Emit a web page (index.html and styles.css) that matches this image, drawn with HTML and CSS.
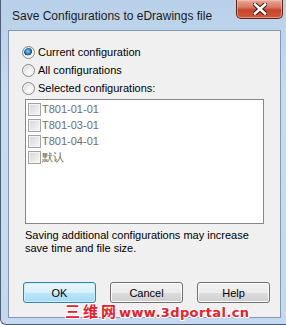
FILE: index.html
```html
<!DOCTYPE html>
<html lang="en">
<head>
  <meta charset="UTF-8" />
  <title>Save Configurations to eDrawings file</title>
  <link rel="stylesheet" href="styles.css">
</head>
<body>
  <div class="window">
    <div class="titlebar">
      <span class="title">Save Configurations to eDrawings file</span>
      <span class="close">
        <svg width="14" height="12" viewBox="0 0 14 12">
          <path d="M2 1.5 L12 10.5 M12 1.5 L2 10.5" stroke="#3a1a14" stroke-width="4.6" stroke-linecap="square" />
          <path d="M2 1.5 L12 10.5 M12 1.5 L2 10.5" stroke="#fff" stroke-width="2.6" stroke-linecap="square" />
        </svg>
      </span>
    </div>

    <div class="client">
      <div class="options">
        <label class="option"><span class="radio checked"></span>Current configuration</label>
        <label class="option"><span class="radio"></span>All configurations</label>
        <label class="option"><span class="radio"></span>Selected configurations:</label>
      </div>

      <div class="list">
        <div class="item"><span class="check"></span>T801-01-01</div>
        <div class="item"><span class="check"></span>T801-03-01</div>
        <div class="item"><span class="check"></span>T801-04-01</div>
        <div class="item"><span class="check"></span>默认</div>
      </div>

      <p class="note">Saving additional configurations may increase<br>save time and file size.</p>

      <div class="buttons">
        <button class="btn default">OK</button>
        <button class="btn">Cancel</button>
        <button class="btn">Help</button>
      </div>
    </div>

    <!-- site watermark stamped over the bottom edge -->
    <div class="watermark"><span class="cjk">三维网</span>www.3dportal.cn</div>
  </div>
</body>
</html>
```

FILE: styles.css
```css
body {
  margin: 0;
  font-family: "Liberation Sans", Arial, sans-serif;
  font-size: 11px;
  color: #000;
}
.window {
  position: relative;
  width: 286px;
  height: 325px;
  box-sizing: border-box;
  background: linear-gradient(180deg, #b8d0ea 0, #c8dcf1 30%, #c4d9ef 100%);
  border-left: 1px solid #4e6079;
  border-bottom: 1px solid #4e6079;
  border-bottom-left-radius: 6px;
  padding: 0 5px 0 7px;
  display: flex;
  flex-direction: column;
}
.titlebar {
  height: 30px;
  display: flex;
  align-items: flex-start;
}
.title {
  margin: 9px 0 0 4px;
  font-size: 12px;
  line-height: 14px;
  color: #1b1b1b;
}
.close {
  margin-left: auto;
  margin-right: -2px;
  width: 47px;
  height: 19px;
  box-sizing: border-box;
  border: 1px solid #5e2418;
  border-top: none;
  border-radius: 0 0 5px 5px;
  background: linear-gradient(180deg, #e9a99a 0, #d77a64 40%, #c5452c 55%, #d2583b 100%);
  box-shadow: inset 0 0 0 1px rgba(255, 210, 200, 0.5);
  display: flex;
  align-items: center;
  justify-content: center;
}
.client {
  height: 288px;
  box-sizing: border-box;
  border: 1px solid #8497ae;
  background: #f0f0f0;
  padding-top: 12px;
}
.option {
  display: flex;
  align-items: center;
  gap: 3px;
  height: 18px;
  padding-left: 13px;
  line-height: 13px;
}
.radio {
  width: 13px;
  height: 13px;
  box-sizing: border-box;
  border-radius: 50%;
  border: 1px solid #8a8a8a;
  background: radial-gradient(circle at 65% 70%, #ffffff 0, #f1f1f1 35%, #c8cbcf 100%);
  box-shadow: inset 0 0 0 1px #f4f4f4;
}
.radio.checked {
  background:
    radial-gradient(circle at 45% 40%, #8fd0f7 0, #2d85c6 28%, #17497e 44%, transparent 47%),
    radial-gradient(circle at 65% 70%, #ffffff 0, #f1f1f1 35%, #c8cbcf 100%);
}
.list {
  margin: 2px 0 0 16px;
  width: 239px;
  height: 125px;
  box-sizing: border-box;
  border: 1px solid #828790;
  background: #fff;
  padding: 3px 0 0 2px;
}
.item {
  display: flex;
  align-items: flex-start;
  gap: 1px;
  height: 16px;
  line-height: 13px;
  color: #6d6d6d;
}
.check {
  width: 13px;
  height: 13px;
  box-sizing: border-box;
  border: 1px solid #a3a3a3;
  background: linear-gradient(135deg, #d4d4d4 0, #eeeeee 70%, #f4f4f4 100%);
  box-shadow: inset 0 0 0 1px #f6f6f6;
}
.note {
  margin: 5px 0 0 16px;
  line-height: 13px;
}
.buttons {
  display: flex;
  gap: 14px;
  margin: 27px 0 0 14px;
}
.btn {
  width: 73px;
  height: 21px;
  padding: 0;
  font-family: inherit;
  font-size: 11px;
  color: #000;
  border: 1px solid #707070;
  border-radius: 3px;
  background: linear-gradient(180deg, #f2f2f2 0, #ebebeb 50%, #dddddd 51%, #cfcfcf 100%);
  box-shadow: inset 0 0 0 1px #fcfcfc;
}
.btn.default {
  border-color: #3c7fb1;
  background: linear-gradient(180deg, #eaf6fd 0, #d9f0fc 50%, #bee6fd 51%, #a7d9f5 100%);
  box-shadow: inset 0 0 0 1px #c0f2ff;
}
.watermark {
  position: absolute;
  left: 64px;
  top: 303px;
  font-family: "DejaVu Sans", sans-serif;
  font-weight: bold;
  font-size: 13px;
  line-height: 15px;
  letter-spacing: 0.4px;
  color: #e8202a;
  text-shadow: 1px 0 #fff, -1px 0 #fff, 0 1px #fff, 0 -1px #fff, 1px 1px #fff, -1px -1px #fff, 1px -1px #fff, -1px 1px #fff;
}
.watermark .cjk {
  font-family: "Noto Sans CJK SC", sans-serif;
  font-size: 15px;
  letter-spacing: 3px;
}
```
